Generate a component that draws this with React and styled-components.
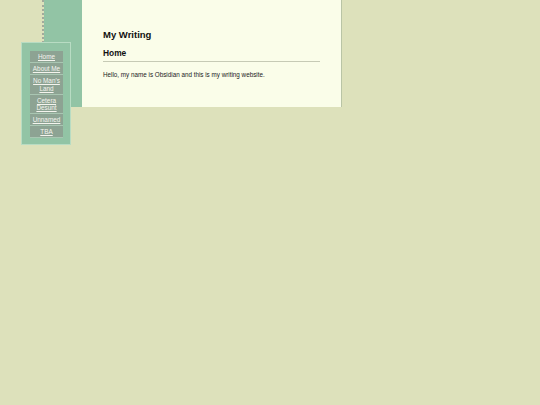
import React from "react";
import styled, { createGlobalStyle } from "styled-components";

const Global = createGlobalStyle`
  html, body { margin: 0; padding: 0; }
  body {
    background: #dde1bb;
    font-family: "Liberation Sans", Arial, sans-serif;
    width: 540px;
    height: 405px;
    overflow: hidden;
  }
`;

const Page = styled.div`
  position: relative;
  display: flex;
  padding-left: 42px;
`;

const Column = styled.div`
  width: 38px;
  height: 107px;
  background: #92c4a5;
  background-clip: padding-box;
  border-left: 2px dotted #a3aa9c;
`;

const Content = styled.main`
  width: 260px;
  height: 107px;
  box-sizing: border-box;
  background: #fafde9;
  border-right: 1px solid #b9c4a6;
  padding: 29px 21px 0 21px;
`;

const Title = styled.h1`
  margin: 0;
  font-size: 9.5px;
  font-weight: bold;
  color: #111;
  line-height: 11px;
`;

const Heading = styled.h2`
  margin: 8px 0 0 0;
  font-size: 8.4px;
  font-weight: bold;
  color: #111;
  line-height: 10px;
  padding-bottom: 3px;
  border-bottom: 1px solid #c6cab5;
`;

const Text = styled.p`
  margin: 9px 0 0 0;
  font-size: 6.3px;
  line-height: 8px;
  color: #222;
`;

const Nav = styled.nav`
  position: absolute;
  left: 21px;
  top: 42px;
  width: 50px;
  height: 103px;
  box-sizing: border-box;
  background: #92c4a5;
  border: 1px solid #b8dcc3;
  padding: 8px 7px 0 8px;
  display: flex;
  flex-direction: column;
`;

const NavItem = styled.a`
  display: block;
  background: #8da393;
  color: #f4f4ee;
  font-size: 6.4px;
  line-height: 7.5px;
  text-align: center;
  text-decoration: underline;
  padding: 2px 1px 1.5px;
  border-bottom: 1px solid #a9c6b2;
`;

const items = ["Home", "About Me", "No Man's Land", "Cetera Desunt", "Unnamed", "TBA"];

export default function App() {
  return (
    <>
      <Global />
      <Page>
        <Column />
        <Content>
          <Title>My Writing</Title>
          <Heading>Home</Heading>
          <Text>Hello, my name is Obsidian and this is my writing website.</Text>
        </Content>
        <Nav>
          {items.map((t) => (
            <NavItem key={t} href="#">{t}</NavItem>
          ))}
        </Nav>
      </Page>
    </>
  );
}
